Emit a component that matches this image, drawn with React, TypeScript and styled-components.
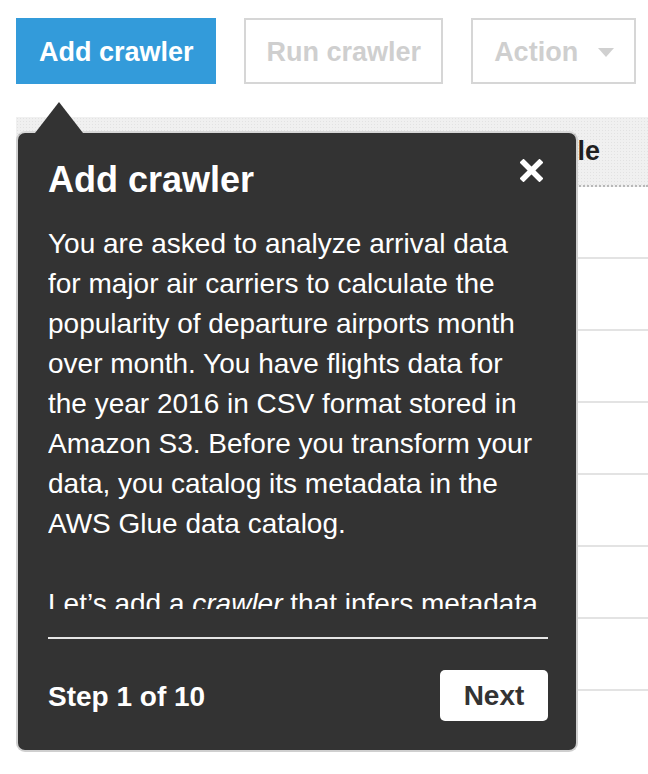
import React from "react";
import styled, { createGlobalStyle } from "styled-components";

const Global = createGlobalStyle`
  html, body { margin: 0; padding: 0; background: #ffffff; }
  body {
    width: 648px;
    height: 774px;
    overflow: hidden;
    font-family: "Liberation Sans", Arial, Helvetica, sans-serif;
    color: #222;
  }
  * { box-sizing: border-box; }
`;

const Page = styled.div`
  position: relative;
  padding: 18px 0 0 16px;
  height: 774px;
`;

const Toolbar = styled.div`
  display: flex;
  gap: 28px;
  align-items: center;
`;

const Button = styled.button<{ $primary?: boolean }>`
  height: 66px;
  padding: 2px 20px 0 21px;
  display: inline-flex;
  align-items: center;
  gap: 20px;
  font-family: inherit;
  font-size: 27px;
  font-weight: bold;
  border: 2px solid ${(p) => (p.$primary ? "#339bda" : "#d6d6d6")};
  background: ${(p) => (p.$primary ? "#339bda" : "#ffffff")};
  color: ${(p) => (p.$primary ? "#ffffff" : "#cfcfcf")};
  border-radius: 0;
  cursor: ${(p) => (p.$primary ? "pointer" : "default")};
`;

const Caret = styled.span`
  width: 0;
  height: 0;
  border-left: 8px solid transparent;
  border-right: 8px solid transparent;
  border-top: 9px solid #d0d0d0;
`;

const Table = styled.div`
  margin-top: 33px;
  width: 632px;
`;

const HeaderRow = styled.div`
  display: grid;
  grid-template-columns: 464px 1fr;
  align-items: center;
  height: 70px;
  background-color: #f0f0f0;
  background-image: radial-gradient(#e2e2e2 0.6px, transparent 0.8px);
  background-size: 3px 3px;
  border-bottom: 2px dotted #b8b8b8;
`;

const HeaderCell = styled.div`
  font-size: 27px;
  font-weight: bold;
  color: #1f1f1f;
  padding-left: 22px;
  white-space: nowrap;
`;

const ScheduleCell = styled(HeaderCell)`
  padding-left: 0;
`;

const Row = styled.div`
  height: 72px;
  border-bottom: 2px solid #e3e3e3;
`;

const Popover = styled.div`
  position: absolute;
  top: 131px;
  left: 16px;
  width: 562px;
  background: #333333;
  border: 2px solid #cfcfcf;
  border-top-color: #d8d8d8;
  border-radius: 9px;
  padding: 22px 28px 29px 30px;
  color: #ffffff;
`;

const Arrow = styled.div`
  position: absolute;
  top: -31px;
  left: 17px;
  width: 0;
  height: 0;
  border-left: 24px solid transparent;
  border-right: 24px solid transparent;
  border-bottom: 31px solid #333333;
`;

const TitleRow = styled.div`
  display: flex;
  justify-content: space-between;
  align-items: flex-start;
  height: 43px;
`;

const Title = styled.h2`
  margin: 0;
  padding-top: 3px;
  font-size: 36px;
  line-height: 43px;
  font-weight: bold;
  color: #ffffff;
`;

const CloseButton = styled.button`
  margin: 4px 5px 0 0;
  padding: 0;
  width: 23px;
  height: 23px;
  border: none;
  background: transparent;
  display: flex;
  cursor: pointer;
`;

const Body = styled.div`
  margin-top: 26px;
  height: 385px;
  overflow: hidden;
`;

const Paragraph = styled.p`
  margin: 0 0 40px;
  font-size: 28px;
  line-height: 40px;
  color: #ffffff;
`;

const Divider = styled.hr`
  margin: 28px 0 0;
  border: none;
  height: 2px;
  background: #e6e6e6;
`;

const Footer = styled.div`
  margin-top: 31px;
  display: flex;
  justify-content: space-between;
  align-items: center;
  height: 51px;
`;

const StepText = styled.span`
  font-size: 28px;
  font-weight: bold;
  color: #ffffff;
  padding-top: 2px;
`;

const NextButton = styled.button`
  height: 51px;
  width: 108px;
  border: none;
  border-radius: 5px;
  background: #ffffff;
  color: #333333;
  font-family: inherit;
  font-size: 28px;
  font-weight: bold;
  cursor: pointer;
`;

export default function App() {
  return (
    <>
      <Global />
      <Page>
        <Toolbar>
          <Button $primary>Add crawler</Button>
          <Button disabled>Run crawler</Button>
          <Button disabled>
            Action
            <Caret />
          </Button>
        </Toolbar>
        <Table>
          <HeaderRow>
            <HeaderCell>Name</HeaderCell>
            <ScheduleCell>Schedule</ScheduleCell>
          </HeaderRow>
          {Array.from({ length: 7 }).map((_, i) => (
            <Row key={i} />
          ))}
        </Table>
        <Popover>
          <Arrow />
          <TitleRow>
            <Title>Add crawler</Title>
            <CloseButton aria-label="Close">
              <svg width="23" height="23" viewBox="0 0 23 23">
                <path
                  d="M3.5 3.5 L19.5 19.5 M19.5 3.5 L3.5 19.5"
                  stroke="#ffffff"
                  strokeWidth="5.5"
                  strokeLinecap="square"
                  fill="none"
                />
              </svg>
            </CloseButton>
          </TitleRow>
          <Body>
            <Paragraph>
              You are asked to analyze arrival data for major air carriers to
              calculate the popularity of departure airports month over month.
              You have flights data for the year 2016 in CSV format stored in
              Amazon S3. Before you transform your data, you catalog its
              metadata in the AWS Glue data catalog.
            </Paragraph>
            <Paragraph>
              Let’s add a <em>crawler</em> that infers metadata from the flight
              data in your S3 bucket and creates a table in the catalog.
            </Paragraph>
          </Body>
          <Divider />
          <Footer>
            <StepText>Step 1 of 10</StepText>
            <NextButton>Next</NextButton>
          </Footer>
        </Popover>
      </Page>
    </>
  );
}
